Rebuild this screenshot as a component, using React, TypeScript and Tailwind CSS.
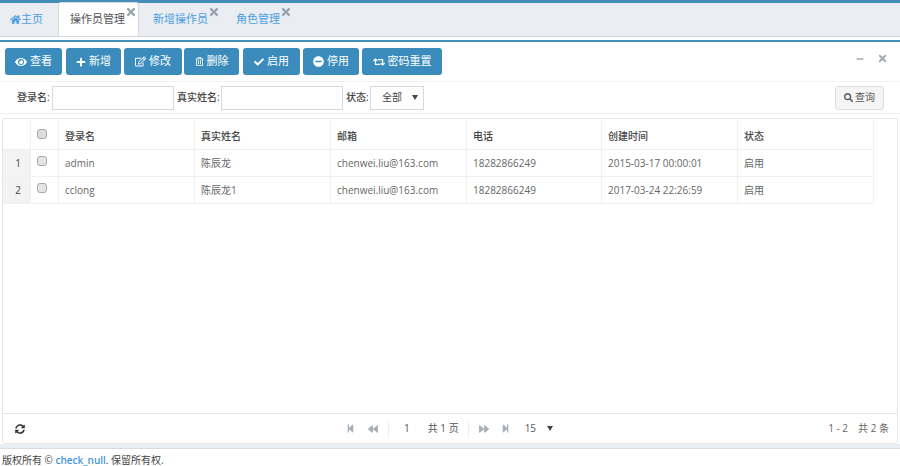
import React from "react";
import { FaEye, FaPlus, FaRegEdit, FaRegTrashAlt, FaCheck, FaMinusCircle, FaRetweet, FaSearch, FaHome, FaTimes, FaMinus, FaSyncAlt, FaStepBackward, FaBackward, FaForward, FaStepForward, FaCaretDown } from "react-icons/fa";

const buttons = [
  { label: "查看", Icon: FaEye, w: "w-[57px]", ic: "text-[12px]" },
  { label: "新增", Icon: FaPlus, w: "w-[55px] ml-[4px]", ic: "text-[10px]" },
  { label: "修改", Icon: FaRegEdit, w: "w-[58px] ml-[3px]", ic: "text-[11px]" },
  { label: "删除", Icon: FaRegTrashAlt, w: "w-[55px] ml-[2px]", ic: "text-[9px]" },
  { label: "启用", Icon: FaCheck, w: "w-[57px] ml-[4px]", ic: "text-[10px]" },
  { label: "停用", Icon: FaMinusCircle, w: "w-[56px] ml-[3px]", ic: "text-[11px]" },
  { label: "密码重置", Icon: FaRetweet, w: "w-[80px] ml-[3px]", ic: "text-[12px]" },
];

const rows = [
  ["admin", "陈辰龙", "chenwei.liu@163.com", "18282866249", "2015-03-17 00:00:01", "启用"],
  ["cclong", "陈辰龙1", "chenwei.liu@163.com", "18282866249", "2017-03-24 22:26:59", "启用"],
];
const headers = ["登录名", "真实姓名", "邮箱", "电话", "创建时间", "状态"];
const widths = ["w-[136px]", "w-[136px]", "w-[136px]", "w-[135px]", "w-[136px]", "w-[137px] border-r"];

function Tab({ label, active }: { label: string; active?: boolean }) {
  return (
    <div className={`relative flex items-center ${active ? "h-[34px] w-[81px] rounded-t-[3px] border-x border-t border-[#d5dae0] bg-white pl-[11px] text-[#555]" : "h-[33px] px-[14px] text-[#4d9fe0]"}`}>
      {label}
      <FaTimes className={`absolute top-[3px] text-[12px] text-[#98a3ad] ${active ? "right-[1px]" : "right-[2px]"}`} />
    </div>
  );
}

export default function App() {
  return (
    <div className="flex h-[466px] w-[900px] flex-col overflow-hidden bg-white text-[10px] text-[#666] font-['Open_Sans','Noto_Sans_CJK_SC',sans-serif]">
      <div className="h-[3px] bg-[#438eb9]" />
      <div className="flex h-[34px] items-end border-b border-[#d5dae0] bg-[#eaedf1] text-[11px]">
        <div className="flex h-[33px] w-[58px] items-center pl-[10px] text-[#4d9fe0]">
          <FaHome className="text-[11px]" />
          主页
        </div>
        <Tab label="操作员管理" active />
        <Tab label="新增操作员" />
        <Tab label="角色管理" />
      </div>
      <div className="mt-[3px] flex min-h-0 flex-1 flex-col bg-white">
        <div className="h-[2px] bg-[#438eb9]" />
        <div className="flex h-[40px] items-center border-b border-[#f2f2f2] pl-[5px] pr-[12px]">
          <div className="flex">
            {buttons.map(({ label, Icon, w, ic }) => (
              <button key={label} className={`flex h-[27px] ${w} items-center justify-center gap-[3px] rounded-[3px] bg-[#3b8cbc] text-[11px] text-white`}>
                <Icon className={ic} />
                {label}
              </button>
            ))}
          </div>
          <div className="mb-[6px] ml-auto flex items-center gap-[13px] text-[#a0a8b4]">
            <FaMinus className="text-[8px]" />
            <FaTimes className="text-[11px]" />
          </div>
        </div>
        <div className="flex h-[32px] items-center border-b border-[#eeeeee] pl-[17px] pr-[16px] font-medium text-[#444]">
          <span className="w-[35px]">登录名:</span>
          <input className="h-[24px] w-[122px] border border-[#d5d9e2] bg-white" />
          <span className="ml-[3px] w-[44px]">真实姓名:</span>
          <input className="h-[24px] w-[122px] border border-[#d5d9e2] bg-white" />
          <span className="ml-[3px] w-[24px]">状态:</span>
          <div className="flex h-[24px] w-[54px] items-center justify-between border border-[#d5d9e2] pl-[11px] pr-[5px] font-normal">
            全部
            <span className="h-0 w-0 border-x-[3px] border-t-[5px] border-x-transparent border-t-[#444]" />
          </div>
          <button className="ml-auto flex h-[24px] w-[49px] items-center justify-center gap-[2px] rounded-[3px] border border-[#dddddd] bg-[#f5f5f5] font-normal text-[#555]">
            <FaSearch className="text-[9px]" />
            查询
          </button>
        </div>
        <div className="ml-[2px] mr-[2px] mt-[4px] flex min-h-0 flex-1 flex-col rounded-[3px] border border-[#e4e6ea]">
          <div className="min-h-0 flex-1">
            <div className="flex h-[31px] w-[871px] border-b border-[#f0f0f0] font-medium text-[#444]">
              <div className="w-[28px] border-r border-[#f0f0f0]" />
              <div className="flex w-[27px] items-center pl-[6px]">
                <span className="h-[10px] w-[10px] rounded-[3px] border border-[#a8a8a8] bg-[#dddddd]" />
              </div>
              {headers.map((h, i) => (
                <div key={h} className={`${widths[i]} flex items-center border-l border-[#f0f0f0] pl-[6px] pt-[4px]`}>{h}</div>
              ))}
            </div>
            {rows.map((r, n) => (
              <div key={n} className="flex h-[27px] w-[871px] border-b border-[#f0f0f0]">
                <div className="flex w-[28px] items-center justify-end border-r border-[#f0f0f0] bg-[#f3f3f3] pr-[9px] pt-[1px] text-[#444]">{n + 1}</div>
                <div className="flex w-[27px] pl-[6px] pt-[6px]">
                  <span className="h-[10px] w-[10px] rounded-[3px] border border-[#a8a8a8] bg-[#e4e4e4]" />
                </div>
                {r.map((c, i) => (
                  <div key={i} className={`${widths[i]} flex items-center border-l border-[#f0f0f0] pl-[6px] pt-[1px]`}>{c}</div>
                ))}
              </div>
            ))}
          </div>
          <div className="flex h-[30px] items-center border-t border-[#e4e6ea] pl-[12px] pr-[8px]">
            <FaSyncAlt className="text-[10px] text-[#333]" />
            <div className="ml-[321px] flex items-center text-[#a8b0b8]">
              <FaStepBackward className="text-[9px]" />
              <FaBackward className="ml-[13px] text-[10px]" />
              <span className="ml-[10px] h-[16px] w-px bg-[#eeeeee]" />
              <span className="ml-[15px] text-[#555]">1</span>
              <span className="ml-[18px] text-[#555]">共 1 页</span>
              <span className="ml-[9px] h-[16px] w-px bg-[#eeeeee]" />
              <FaForward className="ml-[10px] text-[10px]" />
              <FaStepForward className="ml-[12px] text-[9px]" />
              <span className="ml-[15px] text-[#555]">15</span>
              <span className="ml-[11px] h-0 w-0 border-x-[3px] border-t-[5px] border-x-transparent border-t-[#444]" />
            </div>
            <div className="ml-auto flex gap-[10px]">
              <span>1 - 2</span>
              <span>共 2 条</span>
            </div>
          </div>
        </div>
      </div>
      <div className="h-[5px] border-b border-[#d9dde3] bg-[#eaedf1]" />
      <div className="h-[17px] whitespace-pre pl-[2px] pt-[5px] leading-[12px] text-[#444]">
        版权所有 © <span className="font-semibold text-[#3f96d8]">check_null</span>. 保留所有权.
      </div>
    </div>
  );
}
